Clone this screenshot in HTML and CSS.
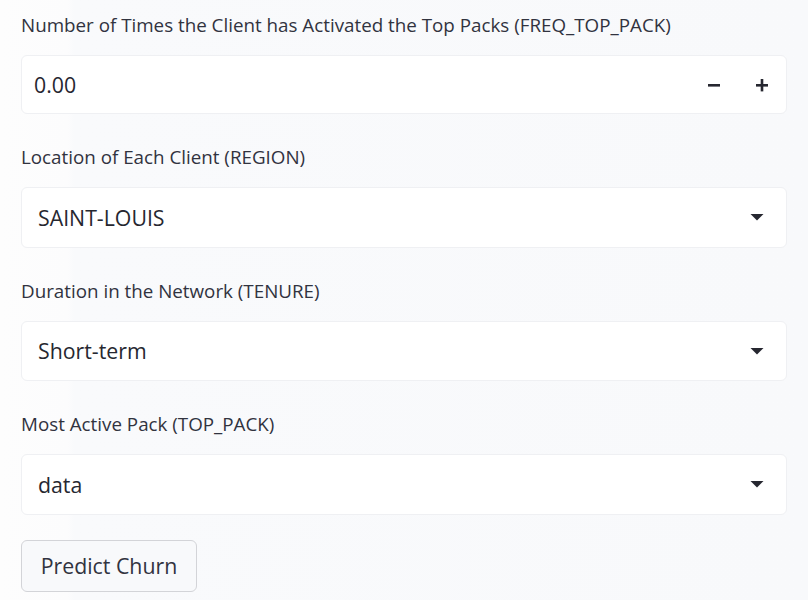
FILE: index.html
```html
<!DOCTYPE html>
<html>
<head>
<meta charset="utf-8">
<link rel="stylesheet" href="styles.css">
</head>
<body>
<div class="form">
  <div class="field">
    <label class="label">Number of Times the Client has Activated the Top Packs (FREQ_TOP_PACK)</label>
    <div class="box number">
      <span class="value num">0.00</span>
      <div class="steps">
        <span class="step"><svg width="14" height="14" viewBox="0 0 14 14"><rect x="1" y="6" width="12" height="2.6" fill="#262730"/></svg></span>
        <span class="step"><svg width="14" height="14" viewBox="0 0 14 14"><rect x="1" y="6" width="12" height="2.6" fill="#262730"/><rect x="5.7" y="1" width="2.6" height="12.4" fill="#262730"/></svg></span>
      </div>
    </div>
  </div>
  <div class="field">
    <label class="label">Location of Each Client (REGION)</label>
    <div class="box select">
      <span class="value">SAINT-LOUIS</span>
      <svg class="caret" width="14" height="8" viewBox="0 0 14 8"><path d="M0.5 1 H13.5 L7 7.5 Z" fill="#262730"/></svg>
    </div>
  </div>
  <div class="field">
    <label class="label">Duration in the Network (TENURE)</label>
    <div class="box select">
      <span class="value">Short-term</span>
      <svg class="caret" width="14" height="8" viewBox="0 0 14 8"><path d="M0.5 1 H13.5 L7 7.5 Z" fill="#262730"/></svg>
    </div>
  </div>
  <div class="field last">
    <label class="label">Most Active Pack (TOP_PACK)</label>
    <div class="box select">
      <span class="value">data</span>
      <svg class="caret" width="14" height="8" viewBox="0 0 14 8"><path d="M0.5 1 H13.5 L7 7.5 Z" fill="#262730"/></svg>
    </div>
  </div>
  <div><button class="btn">Predict Churn</button></div>
</div>
</body>
</html>
```
FILE: styles.css
```css
html, body {
  margin: 0;
  padding: 0;
}
body {
  width: 808px;
  height: 600px;
  overflow: hidden;
  background: linear-gradient(to right, #fdfdfd 0px, #fcfcfd 68px, #f9fafc 74px, #f8f9fb 808px);
  font-family: "Source Sans Pro", "Open Sans", sans-serif;
  color: #31333f;
}
.form {
  display: flex;
  flex-direction: column;
  padding: 13px 21px 0 21px;
}
.field {
  display: flex;
  flex-direction: column;
  margin-bottom: 31px;
}
.field.last {
  margin-bottom: 25px;
}
.label {
  display: block;
  font-size: 18.8px;
  line-height: 24px;
  height: 24px;
  margin-bottom: 18px;
  color: #31333f;
  white-space: nowrap;
}
.box {
  box-sizing: border-box;
  height: 60.5px;
  width: 766px;
  background: #ffffff;
  border: 1px solid #eff0f3;
  border-radius: 6px;
  display: flex;
  align-items: center;
}
.number {
  height: 59px;
  padding-left: 12px;
}
.select {
  padding-left: 16px;
}
.value {
  font-size: 21.3px;
  color: #262730;
  flex: 1;
}
.steps {
  display: flex;
  align-items: center;
}
.step {
  width: 48px;
  display: flex;
  justify-content: center;
  align-items: center;
}
.caret {
  margin-right: 22px;
}
.btn {
  box-sizing: border-box;
  width: 176px;
  height: 52px;
  background: #f8f9fb;
  border: 1px solid #d3d4d8;
  border-radius: 6px;
  font-family: "Source Sans Pro", "Open Sans", sans-serif;
  font-size: 21.3px;
  color: #31333f;
  padding: 0;
}
```
